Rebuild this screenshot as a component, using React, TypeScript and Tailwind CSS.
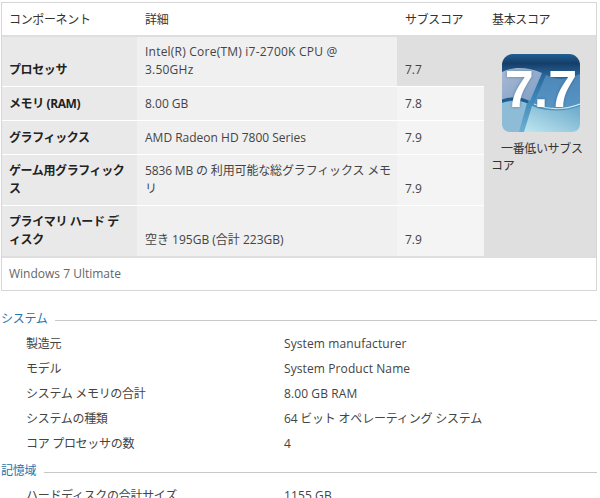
const font = { fontFamily: '"Open Sans", "Noto Sans CJK JP", sans-serif' }

const rows = [
  { name: ["プロセッサ"], detail: ["Intel(R) Core(TM) i7-2700K CPU @", "3.50GHz"], track: "tracking-[0.22px]", score: "7.7", low: true },
  { name: ["メモリ (RAM)"], detail: ["8.00 GB"], track: "", score: "7.8" },
  { name: ["グラフィックス"], detail: ["AMD Radeon HD 7800 Series"], track: "", score: "7.9" },
  { name: ["ゲーム用グラフィック", "ス"], detail: ["5836 MB の 利用可能な総グラフィックス メモ", "リ"], track: "tracking-[-0.15px]", score: "7.9" },
  { name: ["プライマリ ハード デ", "ィスク"], detail: ["", "空き 195GB (合計 223GB)"], track: "", score: "7.9" },
]

const sections = [
  {
    title: "システム",
    items: [
      ["製造元", "System manufacturer"],
      ["モデル", "System Product Name"],
      ["システム メモリの合計", "8.00 GB RAM"],
      ["システムの種類", "64 ビット オペレーティング システム"],
      ["コア プロセッサの数", "4"],
    ],
  },
  {
    title: "記憶域",
    items: [["ハードディスクの合計サイズ", "1155 GB"]],
  },
]

function ScoreBadge() {
  return (
    <div className="relative h-[78px] w-[78px]">
      <svg width="78" height="78" viewBox="0 0 78 78" className="absolute inset-0">
        <defs>
          <linearGradient id="bg" x1="0" y1="0" x2="0" y2="1">
            <stop offset="0" stopColor="#1f5f92" />
            <stop offset="0.12" stopColor="#153e69" />
            <stop offset="0.28" stopColor="#2a689c" />
            <stop offset="0.6" stopColor="#3f8abb" />
            <stop offset="1" stopColor="#6fb0d0" />
          </linearGradient>
          <linearGradient id="flag" x1="0" y1="0" x2="1" y2="1">
            <stop offset="0" stopColor="#aab9d2" />
            <stop offset="1" stopColor="#7d9fc6" />
          </linearGradient>
          <linearGradient id="low" x1="0" y1="1" x2="1" y2="0">
            <stop offset="0" stopColor="#bfe7ef" />
            <stop offset="1" stopColor="#6aa8cb" />
          </linearGradient>
        </defs>
        <rect width="78" height="78" rx="11" fill="url(#bg)" />
        <path d="M0 18C12 12 26 13 40 19L28 47C19 43 9 43 0 46Z" fill="url(#flag)" />
        <path d="M44 21C54 26 66 26 78 20V50C62 56 46 55 32 49Z" fill="#5c95c4" opacity="0.7" />
        <path d="M0 49C9 46 17 46 25 49L17 78H9C3 78 0 75 0 69Z" fill="#8ebcd6" />
        <path d="M30 52C46 58 62 58 78 52V69C78 75 75 78 69 78H22Z" fill="url(#low)" />
        <path d="M32 50C46 56 62 56 78 50" stroke="#cfe8f1" strokeWidth="1.2" fill="none" />
        <path d="M0 47C9 44 18 44 26 48" stroke="#1f5c8f" strokeWidth="3" fill="none" />
      </svg>
      <span className="absolute inset-0 flex items-center justify-center pb-[9px] text-[52px] leading-none font-bold text-white [font-family:'Liberation_Sans',sans-serif] [text-shadow:0_0_3px_rgba(30,70,110,0.5)]">
        7.7
      </span>
    </div>
  )
}

export default function App() {
  return (
    <div className="w-[600px] h-[498px] overflow-hidden bg-white text-[12px] leading-[17px] text-[#444]" style={font}>
      <div className="mt-[2px] ml-[1px] w-[596px] border border-[#d6d6d6]">
        {/* header */}
        <div className="flex h-[32px] items-center pl-[7px] text-[#333] tracking-[-0.35px]">
          <div className="w-[136px]">コンポーネント</div>
          <div className="w-[260px]">詳細</div>
          <div className="w-[87px]">サブスコア</div>
          <div>基本スコア</div>
        </div>

        <div className="flex border-t-2 border-[#dedede]">
          <div className="w-[482px]">
            {rows.map((row, i) => (
              <div key={i} className={`flex items-end ${i === 0 ? "h-[49px]" : i < 3 ? "h-[33px] mt-[1px]" : "h-[50px] mt-[1px]"}`}>
                <div className="flex h-full w-[135px] items-end bg-[#e9e9e9] pb-[7px] pl-[7px] font-bold text-[#222] tracking-[-0.4px]">
                  <div>
                    {row.name.map((line) => (
                      <div key={line} className="h-[18px]">{line}</div>
                    ))}
                  </div>
                </div>
                <div className={`flex h-full w-[260px] items-end bg-[#f0f0f0] pb-[7px] pl-[8px] ${row.track}`}>
                  <div>
                    {row.detail.map((line, j) => (
                      <div key={j} className="h-[18px]">{line}</div>
                    ))}
                  </div>
                </div>
                <div className={`flex h-full flex-1 items-end pb-[8px] pl-[8px] ${row.low ? "bg-[#dfdfdf]" : "bg-[#f4f4f4]"}`}>
                  {row.score}
                </div>
              </div>
            ))}
          </div>
          <div className="flex-1 bg-[#dfdfdf] pt-[17px] pl-[7px] text-[#333]">
            <div className="ml-[11px]">
              <ScoreBadge />
            </div>
            <div className="mt-[8px] w-[96px] indent-[10px] tracking-[-0.35px]">一番低いサブスコア</div>
          </div>
        </div>

        {/* edition */}
        <div className="flex h-[34px] items-center border-t-2 border-[#dedede] pb-[2px] pl-[7px] text-[#666]">
          Windows 7 Ultimate
        </div>
      </div>

      <div className="mt-[19px]">
        {sections.map((section, s) => (
          <div key={section.title} className={s > 0 ? "mt-[2px]" : ""}>
            <div className="flex h-[18px] items-start gap-[8px] pl-[1px] text-[#1f74ad] tracking-[-0.3px]">
              <span>{section.title}</span>
              <span className="mt-[10px] h-px flex-1 bg-[#c8c8c8] mr-[3px]" />
            </div>
            <div className="mt-[7px]">
              {section.items.map(([label, value]) => (
                <div key={label} className="flex h-[25px] pl-[26px]">
                  <div className="w-[258px] tracking-[-0.3px]">{label}</div>
                  <div className={value.includes("ビット") ? "tracking-[-0.2px]" : "tracking-[0.1px]"}>{value}</div>
                </div>
              ))}
            </div>
          </div>
        ))}
      </div>
    </div>
  )
}
